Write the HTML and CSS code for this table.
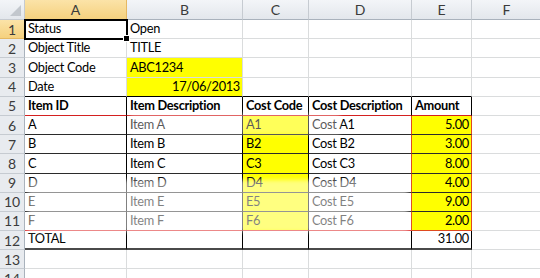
FILE: index.html
```html
<!DOCTYPE html>
<html lang="en">
<head>
    <meta charset="UTF-8" />
    <title>Object Costs</title>
    <link rel="stylesheet" href="styles.css">
</head>
<body>
<div class="sheet">
    <!-- column headers -->
    <div class="hd corner"></div>
    <div class="hd col active">A</div>
    <div class="hd col">B</div>
    <div class="hd col">C</div>
    <div class="hd col">D</div>
    <div class="hd col">E</div>
    <div class="hd col">F</div>
    <div class="hd col"></div>

    <!-- 1 -->
    <div class="hd row active">1</div>
    <div class="c selected">Status</div>
    <div class="c">Open</div>
    <div class="c"></div><div class="c"></div><div class="c"></div><div class="c"></div><div class="c"></div>

    <!-- 2 -->
    <div class="hd row">2</div>
    <div class="c">Object Title</div>
    <div class="c">TITLE</div>
    <div class="c"></div><div class="c"></div><div class="c"></div><div class="c"></div><div class="c"></div>

    <!-- 3 -->
    <div class="hd row">3</div>
    <div class="c">Object Code</div>
    <div class="c yellow">ABC1234</div>
    <div class="c"></div><div class="c"></div><div class="c"></div><div class="c"></div><div class="c"></div>

    <!-- 4 -->
    <div class="hd row">4</div>
    <div class="c b-top">Date</div>
    <div class="c b-top yellow num">17/06/2013</div>
    <div class="c b-top"></div><div class="c b-top"></div><div class="c b-top"></div><div class="c"></div><div class="c"></div>

    <!-- 5 -->
    <div class="hd row">5</div>
    <div class="c th">Item ID</div>
    <div class="c th">Item Description</div>
    <div class="c th">Cost Code</div>
    <div class="c th">Cost Description</div>
    <div class="c th">Amount</div>
    <div class="c"></div><div class="c"></div>

    <!-- 6 -->
    <div class="hd row">6</div>
    <div class="c td">A</div>
    <div class="c td">Item A</div>
    <div class="c td yellow">A1</div>
    <div class="c td box-l">Cost A1</div>
    <div class="c td box yellow num">5.00</div>
    <div class="c"></div><div class="c"></div>

    <!-- 7 -->
    <div class="hd row">7</div>
    <div class="c td">B</div>
    <div class="c td">Item B</div>
    <div class="c td yellow">B2</div>
    <div class="c td box-l">Cost B2</div>
    <div class="c td box yellow num">3.00</div>
    <div class="c"></div><div class="c"></div>

    <!-- 8 -->
    <div class="hd row">8</div>
    <div class="c td">C</div>
    <div class="c td">Item C</div>
    <div class="c td yellow">C3</div>
    <div class="c td box-l">Cost C3</div>
    <div class="c td box yellow num">8.00</div>
    <div class="c"></div><div class="c"></div>

    <!-- 9 -->
    <div class="hd row">9</div>
    <div class="c td">D</div>
    <div class="c td">Item D</div>
    <div class="c td yellow">D4</div>
    <div class="c td box-l">Cost D4</div>
    <div class="c td box yellow num">4.00</div>
    <div class="c"></div><div class="c"></div>

    <!-- 10 -->
    <div class="hd row">10</div>
    <div class="c td">E</div>
    <div class="c td">Item E</div>
    <div class="c td yellow">E5</div>
    <div class="c td box-l">Cost E5</div>
    <div class="c td box yellow num">9.00</div>
    <div class="c"></div><div class="c"></div>

    <!-- 11 -->
    <div class="hd row">11</div>
    <div class="c td last">F</div>
    <div class="c td last">Item F</div>
    <div class="c td last yellow">F6</div>
    <div class="c td last box-l">Cost F6</div>
    <div class="c td box box-end yellow num">2.00</div>
    <div class="c"></div><div class="c"></div>

    <!-- 12 -->
    <div class="hd row">12</div>
    <div class="c total">TOTAL</div>
    <div class="c total"></div>
    <div class="c total"></div>
    <div class="c total"></div>
    <div class="c total num">31.00</div>
    <div class="c"></div><div class="c"></div>

    <!-- 13 -->
    <div class="hd row">13</div>
    <div class="c"></div><div class="c"></div><div class="c"></div><div class="c"></div><div class="c"></div><div class="c"></div><div class="c"></div>

    <!-- 14 -->
    <div class="hd row">14</div>
    <div class="c"></div><div class="c"></div><div class="c"></div><div class="c"></div><div class="c"></div><div class="c"></div><div class="c"></div>

    <!-- faded stamp lying over the table -->
    <div class="haze haze-top"></div>
    <div class="haze haze-bottom"></div>
</div>
</body>
</html>
```

FILE: styles.css
```css
body {
  margin: 0;
  background: #fff;
  overflow: hidden;
  font-family: Lato, "Liberation Sans", sans-serif;
}

.sheet {
  position: relative;
  display: grid;
  grid-template-columns: 25px 102px 116px 66px 103px 60px 70px 1fr;
  grid-template-rows: 20px repeat(14, 19.2px);
  width: 540px;
}

/* headers */
.hd {
  box-sizing: border-box;
  display: flex;
  align-items: center;
  justify-content: center;
  font-size: 14px;
  color: #3b3b3b;
  background: linear-gradient(#f3f5f8, #e3e7ec);
  border-right: 1px solid #c6cbd1;
  border-bottom: 1px solid #c6cbd1;
}

.hd.col {
  border-bottom-color: #a9b2bc;
}

.hd.row {
  background: #e8ebef;
  border-right-color: #a9b2bc;
}

.hd.active {
  background: linear-gradient(#fbe3a8, #f5d17e);
  border-right-color: #e5b862;
  border-bottom-color: #e0a94e;
}

.hd.row.active {
  border-right-color: #e0a94e;
  border-bottom-color: #e5b862;
}

.corner {
  position: relative;
  background: linear-gradient(#f3f5f8, #e3e7ec);
}

.corner::after {
  content: "";
  position: absolute;
  right: 3px;
  bottom: 3px;
  border-left: 11px solid transparent;
  border-bottom: 11px solid #c2c7cd;
}

/* cells */
.c {
  box-sizing: border-box;
  display: flex;
  align-items: flex-end;
  padding: 0 2px 1px 3px;
  font-size: 12.8px;
  letter-spacing: -0.3px;
  line-height: 17px;
  color: #000;
  white-space: nowrap;
  overflow: hidden;
  border-right: 1px solid #dadcdd;
  border-bottom: 1px solid #dadcdd;
}

.num {
  justify-content: flex-end;
}

.yellow {
  background: #ffff00;
}

.selected {
  position: relative;
  overflow: visible;
  outline: 2px solid #000;
  outline-offset: -1px;
}

.selected::after {
  content: "";
  position: absolute;
  right: -4px;
  bottom: -4px;
  width: 5px;
  height: 5px;
  background: #000;
  border: 1px solid #fff;
  z-index: 2;
}

.b-top {
  border-bottom-color: #000;
}

.th {
  font-weight: bold;
  border-right-color: #000;
  border-bottom-color: #d42020;
}

.td {
  border-right-color: #000;
  border-bottom-color: #2b2b2b;
}

.td.last {
  border-bottom-color: #e04040;
}

.box-l,
.box {
  border-right-color: #df4a1f;
}

.box-end {
  border-bottom-color: #df4a1f;
}

.total {
  border-right-color: #000;
  border-bottom: 2px solid #4a4a4a;
}

/* washed-out watermark patches */
.haze {
  position: absolute;
  pointer-events: none;
  background: rgba(255, 255, 255, 0.5);
  filter: blur(2px);
}

.haze-top {
  left: 130px;
  top: 113px;
  width: 210px;
  height: 22px;
  background: rgba(255, 255, 255, 0.35);
}

.haze-bottom {
  left: 28px;
  top: 180px;
  width: 380px;
  height: 52px;
}
```
